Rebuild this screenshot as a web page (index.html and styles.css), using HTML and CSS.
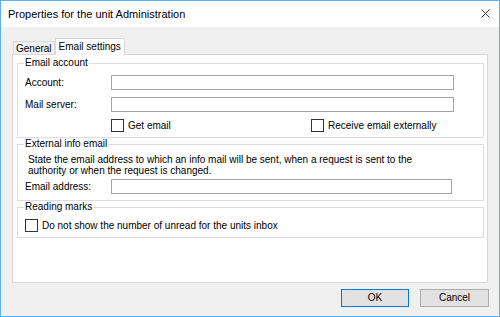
FILE: index.html
```html
<!DOCTYPE html>
<html>
<head>
<meta charset="utf-8">
<link rel="stylesheet" href="styles.css">
</head>
<body>
<div class="window">
  <div class="titlebar">
    <span class="title">Properties for the unit Administration</span>
    <svg class="close" width="9" height="9" viewBox="0 0 9 9"><path d="M0.5 0.5L8.5 8.5M8.5 0.5L0.5 8.5" stroke="#333" stroke-width="1"/></svg>
  </div>
  <div class="content">
    <div class="tabs">
      <div class="tab">General</div>
      <div class="tab active">Email settings</div>
    </div>
    <div class="panel">
      <fieldset class="group g1">
        <legend>Email account</legend>
        <div class="form">
          <label class="lbl">Account:</label><div class="input"></div>
          <label class="lbl">Mail server:</label><div class="input"></div>
          <div></div>
          <div class="checks">
            <div class="check"><span class="box"></span><span>Get email</span></div>
            <div class="check"><span class="box"></span><span>Receive email externally</span></div>
          </div>
        </div>
      </fieldset>
      <fieldset class="group g2">
        <legend>External info email</legend>
        <p class="desc">State the email address to which an info mail will be sent, when a request is sent to the authority or when the request is changed.</p>
        <div class="form">
          <label class="lbl">Email address:</label><div class="input short"></div>
        </div>
      </fieldset>
      <fieldset class="group g3">
        <legend>Reading marks</legend>
        <div class="check solo"><span class="box"></span><span>Do not show the number of unread for the units inbox</span></div>
      </fieldset>
    </div>
    <div class="buttons">
      <div class="btn default">OK</div>
      <div class="btn">Cancel</div>
    </div>
  </div>
</div>
</body>
</html>
```
FILE: styles.css
```css
html, body {
  margin: 0;
  padding: 0;
  background: #ffffff;
}
body {
  font-family: "Liberation Sans", Arial, sans-serif;
  font-size: 10px;
  color: #000;
}
.window {
  width: 500px;
  height: 317px;
  box-sizing: border-box;
  border: 1px solid #5eb0ec;
  display: flex;
  flex-direction: column;
  background: #f0f0f0;
}
.titlebar {
  height: 26px;
  flex: none;
  background: #fff;
  display: flex;
  align-items: center;
  justify-content: space-between;
  padding: 0 9px 0 7px;
}
.title {
  font-size: 11px;
}
.close {
  display: block;
  margin-top: -1px;
}
.content {
  flex: 1;
  display: flex;
  flex-direction: column;
  padding: 11px 11px 9px 11px;
}
.tabs {
  display: flex;
  align-items: flex-end;
  height: 16px;
  padding-left: 1px;
}
.tab {
  height: 13px;
  box-sizing: border-box;
  border: 1px solid #d9d9d9;
  border-bottom: none;
  padding: 0 2px;
  line-height: 13px;
  background: #f0f0f0;
}
.tab.active {
  height: 17px;
  margin-bottom: -1px;
  background: #fff;
  padding: 0 3px;
  line-height: 15px;
  position: relative;
  z-index: 1;
}
.panel {
  flex: 1;
  background: #fff;
  border: 1px solid #d9d9d9;
  padding: 2px 3px 0 4px;
}
.group {
  margin: 0;
  border: 1px solid #dcdcdc;
  padding: 0 8px 0 7px;
}
.group legend {
  padding: 0 1px;
  margin-left: -1px;
  line-height: 12px;
}
.form {
  display: grid;
  grid-template-columns: 86px 343px;
  row-gap: 7px;
  align-items: center;
}
.lbl {
  line-height: 15px;
}
.input {
  height: 15px;
  box-sizing: border-box;
  border: 1px solid #a3a3a3;
  background: #fff;
}
.input.short {
  width: 341px;
}
.checks {
  display: flex;
}
.check {
  display: flex;
  align-items: center;
  gap: 4px;
  height: 13px;
  line-height: 13px;
}
.checks .check:first-child {
  width: 200px;
}
.box {
  width: 13px;
  height: 13px;
  box-sizing: border-box;
  border: 1px solid #333;
  background: #fff;
  flex: none;
}
.g1 .form {
  margin-top: 6px;
  padding-bottom: 5px;
}
.desc {
  margin: 4px 0 3px 3px;
  line-height: 11px;
  max-width: 405px;
}
.g2 .form {
  padding-bottom: 6px;
}
.g3 .solo {
  margin-top: 6px;
  margin-bottom: 5px;
}
.buttons {
  display: flex;
  justify-content: flex-end;
  gap: 11px;
  margin-top: 6px;
  margin-right: -1px;
}
.btn {
  width: 69px;
  height: 18px;
  box-sizing: border-box;
  border: 1px solid #adadad;
  background: #e1e1e1;
  text-align: center;
  line-height: 16px;
}
.btn.default {
  width: 68px;
  border-color: #0078d7;
}
```
